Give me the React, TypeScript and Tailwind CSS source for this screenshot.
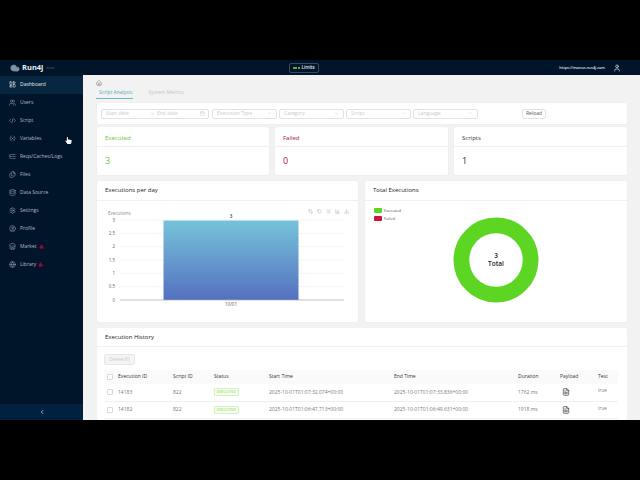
import { LayoutDashboard, Users, CodeXml, Variable, ListTree, Files, Database, Settings, CircleUser, Store, Globe, ChevronLeft, ChevronDown, Calendar, ArrowRight, House, User, FileText, TriangleAlert, Crop, RotateCcw, AlignCenter, BarChart3, Download, Cloud } from "lucide-react";
import { FaHandPointer } from "react-icons/fa";

const nav = [
  { label: "Dashboard", Icon: LayoutDashboard, active: true },
  { label: "Users", Icon: Users },
  { label: "Script", Icon: CodeXml },
  { label: "Variables", Icon: Variable },
  { label: "Reqs/Caches/Logs", Icon: ListTree },
  { label: "Files", Icon: Files },
  { label: "Data Source", Icon: Database },
  { label: "Settings", Icon: Settings },
  { label: "Profile", Icon: CircleUser },
  { label: "Market", Icon: Store, warn: true },
  { label: "Library", Icon: Globe, warn: true },
];

const rows = [
  { id: "14183", script: "822", start: "2025-10-01T01:07:32.074+00:00", end: "2025-10-01T01:07:33.836+00:00", dur: "1762 ms" },
  { id: "14182", script: "822", start: "2025-10-01T01:06:47.713+00:00", end: "2025-10-01T01:06:49.631+00:00", dur: "1918 ms" },
];

const rowGrid = "grid grid-cols-[14px_55px_41px_55px_125px_124px_42px_38px_20px] items-center";

function Select({ label, w }: { label: string; w: string }) {
  return (
    <div className={`${w} h-[10px] border-[0.5px] border-[#e2e2e2] rounded-[2px] flex items-center justify-between px-[4px] text-[#cacaca]`}>
      <span>{label}</span>
      <ChevronDown size={5} />
    </div>
  );
}

function Stat({ title, value, color, className }: { title: string; value: string; color: string; className: string }) {
  return (
    <div className={`${className} h-[48px] bg-white rounded-[2px] shadow-[0_0_2px_rgba(0,0,0,0.06)]`}>
      <div className={`h-[20px] border-b-[0.5px] border-[#f0f0f0] flex items-end pb-[3px] pl-[8px] text-[6px] font-medium ${color}`}>{title}</div>
      <div className={`pl-[8px] pt-[7px] text-[9px] leading-[14px] ${color}`}>{value}</div>
    </div>
  );
}

function Chart() {
  const ticks = [
    ["3", 220], ["2.5", 233.3], ["2", 246.7], ["1.5", 260], ["1", 273.3], ["0.5", 286.7], ["0", 300],
  ] as const;
  return (
    <svg width="261" height="120" viewBox="97 201 261 120" className="block">
      <defs>
        <linearGradient id="bar" x1="0" y1="0" x2="0" y2="1">
          <stop offset="0" stopColor="#76c3da" />
          <stop offset="1" stopColor="#5470c0" />
        </linearGradient>
      </defs>
      <text x="108" y="215" fontSize="4.5" fill="#888">Executions</text>
      {ticks.map(([t, y]) => (
        <g key={t}>
          {y !== 300 && <line x1="120" x2="344" y1={y} y2={y} stroke="#e6e6e6" strokeWidth="0.5" />}
          <text x="115" y={y + 1.6} fontSize="4.5" fill="#666" textAnchor="end">{t}</text>
        </g>
      ))}
      <rect x="163.5" y="220.5" width="135" height="79.5" fill="url(#bar)" />
      <line x1="120" x2="344" y1="300" y2="300" stroke="#a8a8b0" strokeWidth="0.7" />
      <text x="231" y="218" fontSize="4.5" fill="#333" textAnchor="middle" fontWeight="600">3</text>
      <text x="231" y="306" fontSize="4.5" fill="#555" textAnchor="middle">10/01</text>
    </svg>
  );
}

function Donut() {
  return (
    <svg width="90" height="90" viewBox="0 0 90 90" className="block">
      <circle cx="45" cy="45" r="34.6" fill="none" stroke="#5cd623" strokeWidth="15.8" />
      <text x="45" y="43" fontSize="6.5" fill="#222" textAnchor="middle" fontWeight="600">3</text>
      <text x="45" y="51" fontSize="6.5" fill="#222" textAnchor="middle" fontWeight="600">Total</text>
    </svg>
  );
}

export default function App() {
  return (
    <div className="w-[640px] h-[480px] bg-black py-[60px] overflow-hidden font-['Open_Sans',sans-serif] relative">
      <div className="h-[360px] flex flex-col">
        <header className="h-[15px] shrink-0 bg-[#001529] flex items-center text-white">
          <div className="w-[83px] flex items-center pl-[10px] gap-[2px]">
            <Cloud size={10} className="text-[#7f909f]" fill="#7f909f" />
            <span className="text-[7.5px] font-bold text-[#e8edf1] leading-none">Run4j</span>
            <span className="text-[3px] text-[#5c6b78] mt-[2px] ml-[1px]">devxx</span>
          </div>
          <div className="flex-1 flex justify-center">
            <div className="w-[30px] h-[10px] mr-[35px] border-[0.5px] border-[#34495c] rounded-[2px] flex items-center justify-center gap-[2px]">
              <span className="flex gap-[0.5px]">
                <i className="w-[2px] h-[2px] rounded-full bg-[#7be03a]" />
                <i className="w-[2px] h-[2px] rounded-full bg-[#7be03a]" />
                <i className="w-[2px] h-[2px] rounded-full bg-[#7be03a]" />
              </span>
              <span className="text-[4.5px] font-semibold text-[#e8edf1] leading-none">Limits</span>
            </div>
          </div>
          <div className="flex items-center pr-[19px] gap-[8px]">
            <span className="text-[3.8px] font-semibold text-[#dfe5ea]">https://manus.run4j.com</span>
            <User size={8} className="text-[#e8edf1]" />
          </div>
        </header>
        <div className="flex-1 flex min-h-0">
          <aside className="w-[83px] shrink-0 bg-[#001529] flex flex-col">
            <nav className="flex-1 pt-[0.5px]">
              {nav.map(({ label, Icon, active, warn }) => (
                <div key={label} className={`h-[18px] flex items-center pl-[9px] gap-[4px] text-[5px] ${active ? "bg-[#08263f] text-[#e4e9ed]" : "text-[#aeb9c3]"}`}>
                  <Icon size={7} className={active ? "text-[#e4e9ed]" : "text-[#8c99a5]"} />
                  <span className="font-medium">{label}</span>
                  {warn && <TriangleAlert size={5} className="-ml-[2px] text-[#8d0b3c]" fill="#8d0b3c" />}
                </div>
              ))}
            </nav>
            <div className="h-[16px] bg-[#002140] flex items-center justify-center text-[#c8d1d9]">
              <ChevronLeft size={6} strokeWidth={3} />
            </div>
          </aside>
          <main className="flex-1 bg-[#f2f2f2] pl-[14px] pr-[13px] overflow-hidden text-[5px] text-[#333]">
            <div className="h-[12px] flex items-end pb-[1px] -ml-[1px]"><House size={6} className="text-[#777]" /></div>
            <div className="h-[11px] flex items-center gap-[16px] pl-[2px] pt-[1px] relative">
              <span className="text-[#58a9c6]">Script Analysis</span>
              <span className="text-[#c4c4c4]">System Metrics</span>
              <span className="absolute left-[-1px] bottom-[-0.5px] w-[37px] h-[1px] bg-[#69b8d0]" />
            </div>
            <div className="mt-[5px] h-[21px] bg-white rounded-[2px] flex items-center pl-[4px] shadow-[0_0_2px_rgba(0,0,0,0.05)]">
              <div className="w-[108px] h-[10px] border-[0.5px] border-[#e2e2e2] rounded-[2px] flex items-center pl-[4px] pr-[3px] text-[#cacaca]">
                <span className="w-[44px]">Start date</span>
                <ArrowRight size={4} />
                <span className="ml-[3px] flex-1">End date</span>
                <Calendar size={5} />
              </div>
              <div className="flex gap-[2px] ml-[3px]">
                <Select label="Execution Type" w="w-[65px]" />
                <Select label="Category" w="w-[65px]" />
                <Select label="Script" w="w-[65px]" />
                <Select label="Language" w="w-[65px]" />
              </div>
              <div className="ml-[44px] w-[24px] h-[10px] border-[0.5px] border-[#e2e2e2] rounded-[2px] flex items-center justify-center text-[#555]">Reload</div>
            </div>
            <div className="mt-[3px] flex gap-[6px]">
              <Stat title="Executed" value="3" color="text-[#6cc23a]" className="w-[172px]" />
              <Stat title="Failed" value="0" color="text-[#a8123e]" className="w-[173px]" />
              <Stat title="Scripts" value="1" color="text-[#333]" className="w-[173px]" />
            </div>
            <div className="mt-[6px] flex gap-[7px]">
              <section className="w-[261px] h-[141px] bg-white rounded-[2px] shadow-[0_0_2px_rgba(0,0,0,0.06)] relative">
                <div className="h-[20px] border-b-[0.5px] border-[#f0f0f0] flex items-center pl-[8px] text-[6px] font-medium text-[#222]">Executions per day</div>
                <Chart />
                <div className="absolute left-[211px] top-[28px] flex gap-[4px] text-[#aaa]">
                  <Crop size={5} /><RotateCcw size={5} /><AlignCenter size={5} /><BarChart3 size={5} /><Download size={5} />
                </div>
              </section>
              <section className="w-[262px] h-[141px] bg-white rounded-[2px] shadow-[0_0_2px_rgba(0,0,0,0.06)] relative">
                <div className="h-[20px] border-b-[0.5px] border-[#f0f0f0] flex items-center pl-[8px] text-[6px] font-medium text-[#222]">Total Executions</div>
                <div className="absolute left-[9px] top-[27px] flex flex-col gap-[3px] text-[4px] text-[#555]">
                  <div className="flex items-center gap-[2px] h-[5px]"><i className="w-[8px] h-[5px] rounded-[1px] bg-[#5cd623]" />Executed</div>
                  <div className="flex items-center gap-[2px] h-[5px]"><i className="w-[8px] h-[5px] rounded-[1px] bg-[#cf1242]" />Failed</div>
                </div>
                <div className="flex justify-center pt-[14px] pr-[1px]"><Donut /></div>
              </section>
            </div>
            <section className="mt-[6px] bg-white rounded-[2px] h-[92px] overflow-hidden pl-[7px]">
              <div className="h-[19px] border-b-[0.5px] border-[#f0f0f0] flex items-center text-[6px] font-medium text-[#222] -ml-[7px]"><span className="pl-[8px]">Execution History</span></div>
              <div className="mt-[7px] w-[31px] h-[11px] bg-[#f5f5f5] border-[0.5px] border-[#e6e6e6] rounded-[2px] flex items-center justify-center text-[4.5px] text-[#c8c8c8]">Delete (0)</div>
              <div className={`${rowGrid} mt-[5px] h-[14px] bg-[#fafafa] text-[#333] font-medium w-[514px]`}>
                <i className="ml-[3px] w-[6px] h-[6px] border-[0.5px] border-[#d9d9d9] rounded-[1px] bg-white" />
                <span>Execution ID</span><span>Script ID</span><span>Status</span><span>Start Time</span><span>End Time</span><span>Duration</span><span>Payload</span><span>Test</span>
              </div>
              {rows.map((r) => (
                <div key={r.id} className={`${rowGrid} h-[17.5px] border-b-[0.5px] border-[#f0f0f0] text-[#777] w-[514px]`}>
                  <i className="ml-[3px] w-[6px] h-[6px] border-[0.5px] border-[#d9d9d9] rounded-[1px]" />
                  <span>{r.id}</span><span>{r.script}</span>
                  <span className="w-[25px] h-[8px] border-[0.5px] border-[#d5f0c0] bg-[#f6ffed] rounded-[1px] flex items-center justify-center text-[4px] text-[#8ad05e]">EXECUTED</span>
                  <span>{r.start}</span><span>{r.end}</span><span>{r.dur}</span>
                  <span className="pl-[2px]"><FileText size={8} className="text-[#333]" /></span>
                  <span className="text-[4.5px] pb-[3px]">true</span>
                </div>
              ))}
            </section>
          </main>
        </div>
      </div>
      <FaHandPointer size={7} className="absolute left-[65px] top-[137px] text-white" />
    </div>
  );
}
